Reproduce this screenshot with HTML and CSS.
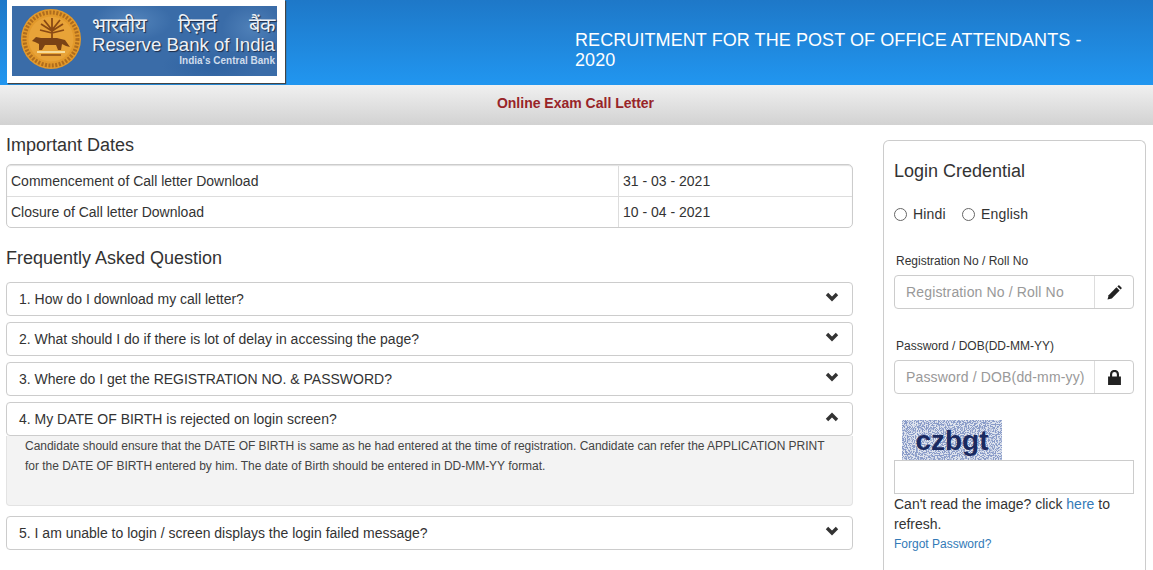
FILE: index.html
```html
<!DOCTYPE html>
<html lang="en">
<head>
    <meta charset="UTF-8">
    <title>Online Exam Call Letter</title>
    <link rel="stylesheet" href="styles.css">
</head>
<body>
<!-- Header -->
<div class="header">
    <div class="logo-frame">
        <div class="logo">
            <svg class="seal" viewBox="0 0 60 60" aria-hidden="true">
                <circle cx="30" cy="30" r="30" fill="#e2992b"/>
                <circle cx="30" cy="30" r="26.500" fill="none" stroke="#9a5a18" stroke-width="4" stroke-dasharray="2 1.500" opacity="0.7"/>
                <circle cx="30" cy="30" r="22.500" fill="#e8a338"/>
                <path d="M31 30V17M31 22L20 15M31 22L42 15M31 21L23 11M31 21L39 11M31 20L31 9M31 24L19 21M31 24L43 21" stroke="#8a4a14" stroke-width="1.800" fill="none"/>
                <path d="M11 32L15 28L20 29L36 29L44 31L49 38L45 37L41 35L40 41H37L35 36H24L21 41H18L18 35L14 33Z" fill="#7a4215"/>
                <path d="M16 43H44" stroke="#f6dc9a" stroke-width="2"/>
                <path d="M20 46H40" stroke="#8a4a14" stroke-width="1.500"/>
            </svg>
            <div class="logo-text">
                <div class="logo-hindi">भारतीय रिज़र्व बैंक</div>
                <div class="logo-name">Reserve Bank of India</div>
                <div class="logo-tag">India's Central Bank</div>
            </div>
        </div>
    </div>
    <div class="header-title">RECRUITMENT FOR THE POST OF OFFICE ATTENDANTS - 2020</div>
</div>
<div class="subheader">Online Exam Call Letter</div>

<div class="content">
    <div class="main-col">
        <h4 class="first-title">Important Dates</h4>
        <div class="dates">
            <div class="date-row">
                <div class="date-name">Commencement of Call letter Download</div>
                <div class="date-value">31 - 03 - 2021</div>
            </div>
            <div class="date-row">
                <div class="date-name">Closure of Call letter Download</div>
                <div class="date-value">10 - 04 - 2021</div>
            </div>
        </div>

        <h4 class="faq-title">Frequently Asked Question</h4>
        <div class="faq">
            <div class="faq-item">
                <span>1. How do I download my call letter?</span>
                <svg class="chev" viewBox="0 0 14 10"><path d="M2 2L7 7L12 2"/></svg>
            </div>
            <div class="faq-item">
                <span>2. What should I do if there is lot of delay in accessing the page?</span>
                <svg class="chev" viewBox="0 0 14 10"><path d="M2 2L7 7L12 2"/></svg>
            </div>
            <div class="faq-item">
                <span>3. Where do I get the REGISTRATION NO. &amp; PASSWORD?</span>
                <svg class="chev" viewBox="0 0 14 10"><path d="M2 2L7 7L12 2"/></svg>
            </div>
            <div class="faq-open">
                <div class="faq-item">
                    <span>4. My DATE OF BIRTH is rejected on login screen?</span>
                    <svg class="chev" viewBox="0 0 14 10"><path d="M2 8L7 3L12 8"/></svg>
                </div>
                <div class="faq-answer">Candidate should ensure that the DATE OF BIRTH is same as he had entered at the time of registration. Candidate can refer the APPLICATION PRINT for the DATE OF BIRTH entered by him. The date of Birth should be entered in DD-MM-YY format.</div>
            </div>
            <div class="faq-item">
                <span>5. I am unable to login / screen displays the login failed message?</span>
                <svg class="chev" viewBox="0 0 14 10"><path d="M2 2L7 7L12 2"/></svg>
            </div>
        </div>
    </div>

    <!-- Login -->
    <div class="login">
        <h4 class="login-title">Login Credential</h4>
        <div class="langs">
            <label class="lang"><span class="radio"></span>Hindi</label>
            <label class="lang"><span class="radio"></span>English</label>
        </div>
        <div class="field-label">Registration No / Roll No</div>
        <div class="input-group">
            <div class="input-box">Registration No / Roll No</div>
            <div class="addon">
                <svg class="addon-icon" viewBox="0 0 14 14"><path d="M0.500 13.500L1.500 9.500L8.800 2.200L11.800 5.200L4.500 12.500Z"/><path d="M9.700 1.300L10.500 0.500Q11 0 11.600 0.500L13.500 2.400Q14 3 13.500 3.500L12.700 4.300Z"/></svg>
            </div>
        </div>
        <div class="field-label">Password / DOB(DD-MM-YY)</div>
        <div class="input-group">
            <div class="input-box">Password / DOB(dd-mm-yy)</div>
            <div class="addon">
                <svg class="addon-icon" viewBox="0 0 14 14"><path d="M1 6H2.800V4A4.200 4.200 0 0 1 11.200 4V6H13V14H1ZM4.800 6H9.200V4A2.200 2.200 0 0 0 4.800 4Z" fill-rule="evenodd"/></svg>
            </div>
        </div>
        <div class="captcha">
            <svg class="captcha-noise" width="100" height="40" aria-hidden="true">
                <filter id="speckle">
                    <feTurbulence type="fractalNoise" baseFrequency="0.9" numOctaves="2" seed="4"/>
                    <feColorMatrix values="0 0 0 0 0.25  0 0 0 0 0.33  0 0 0 0 0.58  0 0 0 9 -4"/>
                </filter>
                <rect width="100" height="40" filter="url(#speckle)"/>
            </svg>
            <span class="captcha-text">czbgt</span>
        </div>
        <div class="captcha-input"></div>
        <div class="refresh">Can't read the image? click <a href="#">here</a> to<br>refresh.</div>
        <a class="forgot" href="#">Forgot Password?</a>
    </div>
</div>
</body>
</html>
```

FILE: styles.css
```css
* {
    box-sizing: border-box;
}

html, body {
    height: 570px;
    overflow: hidden;
}

body {
    margin: 0;
    font-family: "Liberation Sans", Arial, sans-serif;
    font-size: 14px;
    color: #333;
    background: #fff;
}

/* Header */
.header {
    display: flex;
    height: 85px;
    background: linear-gradient(to bottom, #1e78c8, #2196f0);
}

.logo-frame {
    width: 278px;
    height: 83px;
    margin-left: 7px;
    padding: 6px 8px 7px 5px;
    background: #fff;
    box-shadow: 1px 1px 1px #444;
    flex: none;
}

.logo {
    display: flex;
    gap: 11px;
    height: 70px;
    padding: 3px 2px 0 9px;
    background:
        radial-gradient(ellipse 40px 20px at 120px 15px, #5384bb, transparent),
        radial-gradient(ellipse 50px 18px at 200px 60px, #2f62a0, transparent),
        radial-gradient(ellipse 30px 24px at 240px 22px, #4f80b8, transparent),
        #3a6ca8;
}

.seal {
    width: 60px;
    height: 60px;
    flex: none;
}

.logo-text {
    flex: 1;
    padding-top: 5px;
    color: #eef2f7;
    text-shadow: 1px 1px 1px #1d2a44;
}

.logo-hindi {
    font-size: 20px;
    line-height: 22px;
    text-align: justify;
    text-align-last: justify;
}

.logo-name {
    font-size: 18.600px;
    line-height: 18px;
    white-space: nowrap;
}

.logo-tag {
    margin-top: 1px;
    font-size: 10px;
    font-weight: bold;
    line-height: 12px;
    text-align: right;
    color: #cfdcec;
    text-shadow: none;
}

.header-title {
    width: 530px;
    margin: 30px 0 0 290px;
    color: #fff;
    font-size: 18px;
    line-height: 20px;
    letter-spacing: 0.08px;
}

.subheader {
    height: 40px;
    padding-right: 2px;
    background: linear-gradient(to bottom, #f0f0f0, #d2d2d2);
    color: #982428;
    font-size: 14px;
    font-weight: bold;
    line-height: 37px;
    text-align: center;
}

/* Layout */
.content {
    display: flex;
    align-items: flex-start;
    padding: 0 7px 0 6px;
}

.main-col {
    width: 847px;
    flex: none;
}

h4 {
    margin: 0;
    font-size: 18px;
    font-weight: 400;
    line-height: 20px;
}

.first-title {
    margin-top: 10px;
}

/* Dates table */
.dates {
    margin-top: 9px;
    border: 1px solid #ccc;
    border-radius: 5px;
    box-shadow: inset 0 1px 1px rgba(0, 0, 0, 0.12);
}

.date-row {
    display: flex;
    height: 31px;
    line-height: 31px;
}

.date-row:first-child {
    padding-top: 1px;
}

.date-row + .date-row {
    border-top: 1px solid #ddd;
}

.date-name {
    width: 612px;
    padding-left: 4px;
    border-right: 1px solid #ddd;
}

.date-value {
    padding-left: 4px;
}

/* FAQ */
.faq-title {
    margin-top: 20px;
}

.faq {
    display: flex;
    flex-direction: column;
    gap: 6px;
    margin-top: 14px;
}

.faq-open {
    margin-bottom: 4px;
}

.faq-item {
    display: flex;
    justify-content: space-between;
    align-items: center;
    height: 34px;
    padding: 0 13px 0 12px;
    border: 1px solid #ccc;
    border-radius: 4px;
    background: #fff;
}

.chev {
    width: 14px;
    height: 10px;
    margin-top: -5px;
    fill: none;
    stroke: #333;
    stroke-width: 3.400;
}

.faq-answer {
    height: 70px;
    padding: 0 18px;
    border: 1px solid #e3e3e3;
    border-top: none;
    border-radius: 0 0 4px 4px;
    background: #f3f3f3;
    font-size: 12px;
    line-height: 20px;
    letter-spacing: -0.025px;
    color: #444;
}

/* Login */
.login {
    width: 263px;
    height: 430px;
    margin: 15px 0 0 30px;
    padding: 20px 11px 0 10px;
    border: 1px solid #ccc;
    border-bottom: none;
    border-radius: 6px 6px 0 0;
}

.langs {
    display: flex;
    gap: 16px;
    margin-top: 23px;
}

.lang {
    display: flex;
    align-items: center;
    gap: 6px;
    line-height: 20px;
    letter-spacing: 0.2px;
}

.radio {
    width: 13px;
    height: 13px;
    border: 1px solid #666;
    border-radius: 50%;
}

.field-label {
    margin: 30px 0 7px 2px;
    font-size: 12px;
    line-height: 14px;
}

.input-group {
    display: flex;
    height: 34px;
    border: 1px solid #ccc;
    border-radius: 4px;
}

.input-group + .field-label {
    margin-top: 30px;
}

.input-box {
    flex: 1;
    padding-left: 11px;
    border-right: 1px solid #ddd;
    color: #999;
    line-height: 32px;
    letter-spacing: 0.15px;
    white-space: nowrap;
}

.addon {
    display: flex;
    align-items: center;
    justify-content: center;
    width: 38px;
}

.addon-icon {
    width: 15px;
    height: 15px;
    fill: #222;
}

.captcha {
    position: relative;
    width: 100px;
    height: 40px;
    margin: 26px 0 0 8px;
    background: #dfe4ee;
    text-align: center;
}

.captcha-noise {
    position: absolute;
    top: 0;
    left: 0;
}

.captcha-text {
    position: relative;
    color: #1a2a60;
    font-size: 28px;
    font-weight: bold;
    line-height: 42px;
}

.captcha-input {
    height: 34px;
    border: 1px solid #ccc;
}

.refresh {
    line-height: 20px;
}

.refresh a {
    color: #337ab7;
    text-decoration: none;
}

.forgot {
    display: block;
    margin-top: 2px;
    color: #337ab7;
    font-size: 12px;
    line-height: 17px;
    text-decoration: none;
}
```
